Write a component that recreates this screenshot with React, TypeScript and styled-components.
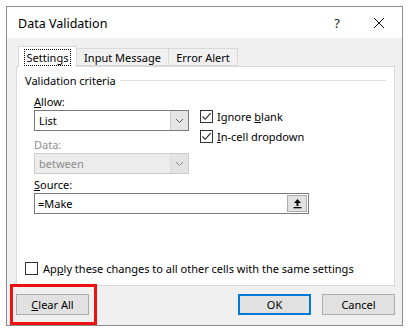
import styled, {createGlobalStyle} from 'styled-components';

const GlobalStyle = createGlobalStyle`
  html, body {
    margin: 0;
    padding: 0;
    background: #ffffff;
  }
  body {
    font-family: 'Noto Sans', 'Open Sans', sans-serif;
    font-size: 11px;
    color: #000;
  }
`;

export default function App() {
  return (
    <>
      <GlobalStyle />
      <Dialog>
        <TitleBar>
          <Title>Data Validation</Title>
          <TitleButtons>
            <HelpGlyph>?</HelpGlyph>
            <CloseIcon viewBox="0 0 12 12">
              <path d="M1 1 L11 11 M11 1 L1 11" stroke="#111" strokeWidth="1" fill="none" />
            </CloseIcon>
          </TitleButtons>
        </TitleBar>
        <Body>
          <Tabs>
            <Tab active width={59}>
              <FocusLabel>Settings</FocusLabel>
            </Tab>
            <Tab width={92}>Input Message</Tab>
            <Tab width={69}>Error Alert</Tab>
          </Tabs>
          <Panel>
            <GroupHeader>
              <span>Validation criteria</span>
              <GroupLine />
            </GroupHeader>
            <Criteria>
              <FieldLabel>
                <u>A</u>llow:
              </FieldLabel>
              <AllowRow>
                <Select>
                  <SelectValue>List</SelectValue>
                  <Chevron />
                </Select>
                <Checks>
                  <CheckRow>
                    <CheckBox checked />
                    <span>
                      Ignore <u>b</u>lank
                    </span>
                  </CheckRow>
                  <CheckRow>
                    <CheckBox checked />
                    <span>
                      <u>I</u>n-cell dropdown
                    </span>
                  </CheckRow>
                </Checks>
              </AllowRow>
              <FieldLabel disabled>Data:</FieldLabel>
              <Select disabled>
                <SelectValue>between</SelectValue>
                <Chevron disabled />
              </Select>
              <FieldLabel>
                <u>S</u>ource:
              </FieldLabel>
              <SourceInput>
                <SourceText>=Make</SourceText>
                <RefButton>
                  <svg width="11" height="11" viewBox="0 0 11 11">
                    <path d="M5.5 1 L9 5 H6.5 V8 H4.5 V5 H2 Z" fill="#000" />
                    <rect x="1.5" y="9" width="8" height="1.3" fill="#000" />
                  </svg>
                </RefButton>
              </SourceInput>
            </Criteria>
            <ApplyRow>
              <CheckBox />
              <span>
                Ap<u>p</u>ly these changes to all other cells with the same settings
              </span>
            </ApplyRow>
          </Panel>
          <Footer>
            <ClearWrap>
              <Button>
                <u>C</u>lear All
              </Button>
              <Highlight />
            </ClearWrap>
            <RightButtons>
              <Button primary>OK</Button>
              <Button>Cancel</Button>
            </RightButtons>
          </Footer>
        </Body>
      </Dialog>
    </>
  );
}

function CheckBox({checked = false}: {checked?: boolean}) {
  return (
    <Box>
      {checked && (
        <svg width="11" height="11" viewBox="0 0 11 11">
          <path d="M1.5 5.5 L4.3 8.3 L9.6 2.2" stroke="#222" strokeWidth="1.1" fill="none" />
        </svg>
      )}
    </Box>
  );
}

function Chevron({disabled = false}: {disabled?: boolean}) {
  return (
    <ArrowBox disabled={disabled}>
      <svg width="9" height="6" viewBox="0 0 9 6">
        <path d="M1 1 L4.5 4.5 L8 1" stroke={disabled ? '#888' : '#555'} strokeWidth="1" fill="none" />
      </svg>
    </ArrowBox>
  );
}

const Dialog = styled.div`
  margin: 6px 0 0 6px;
  width: 397px;
  height: 320px;
  box-sizing: border-box;
  border: 1px solid #8c8c8c;
  display: flex;
  flex-direction: column;
  background: #f0f0f0;
`;

const TitleBar = styled.div`
  height: 31px;
  flex: none;
  background: #ffffff;
  display: flex;
  align-items: center;
  justify-content: space-between;
  padding-left: 11px;
`;

const Title = styled.div`
  font-size: 12.5px;
  color: #000;
  margin-top: 2px;
`;

const TitleButtons = styled.div`
  display: flex;
  align-items: center;
  gap: 33px;
  padding-right: 17px;
`;

const HelpGlyph = styled.span`
  font-size: 13px;
  color: #222;
`;

const CloseIcon = styled.svg`
  width: 12px;
  height: 12px;
`;

const Body = styled.div`
  flex: 1;
  display: flex;
  flex-direction: column;
  padding: 8px 7px 0 9px;
`;

const Tabs = styled.div`
  display: flex;
  align-items: flex-end;
  height: 20px;
  padding-left: 2px;
  position: relative;
  z-index: 1;
`;

const Tab = styled.div<{active?: boolean; width: number}>`
  box-sizing: border-box;
  width: ${(p) => p.width}px;
  height: ${(p) => (p.active ? '21px' : '18px')};
  margin-bottom: ${(p) => (p.active ? '-1px' : '0')};
  display: flex;
  align-items: center;
  justify-content: center;
  border: 1px solid #d9d9d9;
  border-bottom: ${(p) => (p.active ? 'none' : '1px solid #d9d9d9')};
  background: ${(p) => (p.active ? '#ffffff' : '#f0f0f0')};
  & + & {
    border-left: none;
  }
`;

const FocusLabel = styled.span`
  outline: 1px dotted #000;
  padding: 0 2px;
  line-height: 15px;
`;

const Panel = styled.div`
  box-sizing: border-box;
  height: 220px;
  flex: none;
  background: #ffffff;
  border: 1px solid #d9d9d9;
  display: flex;
  flex-direction: column;
  padding: 5px 8px 0 8px;
`;

const GroupHeader = styled.div`
  display: flex;
  align-items: center;
  gap: 4px;
  height: 16px;
`;

const GroupLine = styled.div`
  flex: 1;
  height: 1px;
  background: #dcdcdc;
`;

const Criteria = styled.div`
  display: flex;
  flex-direction: column;
  padding-left: 9px;
  margin-top: 6px;
`;

const FieldLabel = styled.div<{disabled?: boolean}>`
  height: 15px;
  line-height: 15px;
  color: ${(p) => (p.disabled ? '#8d8d8d' : '#000')};
  margin-bottom: 1px;
`;

const AllowRow = styled.div`
  display: flex;
  align-items: flex-start;
  gap: 11px;
  height: 21px;
  margin-bottom: 6px;
`;

const Select = styled.div<{disabled?: boolean}>`
  box-sizing: border-box;
  width: 155px;
  height: 21px;
  flex: none;
  display: flex;
  border: 1px solid ${(p) => (p.disabled ? '#cccccc' : '#7a7a7a')};
  background: ${(p) => (p.disabled ? '#ececec' : '#ffffff')};
  color: ${(p) => (p.disabled ? '#8d8d8d' : '#000')};
  margin-bottom: 3px;
`;

const SelectValue = styled.div`
  flex: 1;
  display: flex;
  align-items: center;
  padding-left: 4px;
`;

const ArrowBox = styled.div<{disabled?: boolean}>`
  width: 17px;
  display: flex;
  align-items: center;
  justify-content: center;
  background: ${(p) => (p.disabled ? '#e3e3e3' : '#e5e5e5')};
  border-left: 1px solid ${(p) => (p.disabled ? '#dadada' : '#d0d0d0')};
`;

const Checks = styled.div`
  display: flex;
  flex-direction: column;
  gap: 7px;
  margin-top: 0;
`;

const CheckRow = styled.div`
  display: flex;
  align-items: center;
  gap: 4px;
  height: 13px;
`;

const Box = styled.div`
  box-sizing: border-box;
  width: 13px;
  height: 13px;
  border: 1px solid #333;
  background: #fff;
  display: flex;
  align-items: center;
  justify-content: center;
  flex: none;
`;

const SourceInput = styled.div`
  box-sizing: border-box;
  width: 275px;
  height: 21px;
  display: flex;
  align-items: center;
  border: 1px solid #7a7a7a;
  background: #fff;
  padding-right: 1px;
`;

const SourceText = styled.div`
  flex: 1;
  padding-left: 3px;
`;

const RefButton = styled.div`
  box-sizing: border-box;
  width: 20px;
  height: 17px;
  display: flex;
  align-items: center;
  justify-content: center;
  background: #e1e1e1;
  border: 1px solid #adadad;
`;

const ApplyRow = styled.div`
  display: flex;
  align-items: center;
  gap: 5px;
  margin-top: auto;
  margin-bottom: 9px;
`;

const Footer = styled.div`
  flex: 1;
  display: flex;
  align-items: center;
  justify-content: space-between;
  padding-bottom: 2px;
`;

const ClearWrap = styled.div`
  position: relative;
`;

const Highlight = styled.div`
  position: absolute;
  left: -6px;
  top: -10px;
  right: -8px;
  bottom: -10px;
  border: 3px solid #ee1111;
  pointer-events: none;
`;

const RightButtons = styled.div`
  display: flex;
  gap: 11px;
`;

const Button = styled.div<{primary?: boolean}>`
  box-sizing: border-box;
  width: 73px;
  height: 21px;
  display: flex;
  align-items: center;
  justify-content: center;
  background: #e1e1e1;
  border: ${(p) => (p.primary ? '2px solid #0078d7' : '1px solid #adadad')};
`;
